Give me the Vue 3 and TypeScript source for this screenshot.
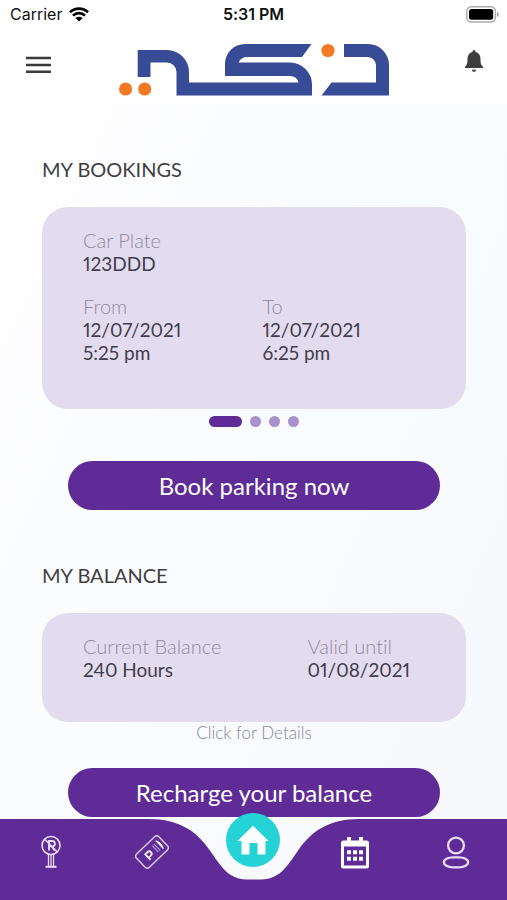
<script setup lang="ts">
import { ref } from 'vue'

interface Booking {
  plate: string
  fromDate: string
  fromTime: string
  toDate: string
  toTime: string
}

const booking: Booking = {
  plate: '123DDD',
  fromDate: '12/07/2021',
  fromTime: '5:25 pm',
  toDate: '12/07/2021',
  toTime: '6:25 pm',
}

const pages: number[] = [1, 2, 3, 4]
const activePage = ref<number>(1)
</script>

<template>
  <div class="screen">
    <header class="top">
      <div class="status">
        <div class="carrier">
          <span>Carrier</span>
          <svg width="20" height="15" viewBox="0 0 20 15" aria-hidden="true">
            <path d="M1 5.2a13 13 0 0 1 18 0M4 8.6a8.6 8.6 0 0 1 12 0" fill="none" stroke="#000" stroke-width="2.7" />
            <path d="M10 14.6 6.4 11.1a5.2 5.2 0 0 1 7.2 0z" fill="#000" />
          </svg>
        </div>
        <span class="clock">5:31 PM</span>
        <svg class="battery" width="33" height="17" viewBox="0 0 33 17" aria-hidden="true">
          <rect x="0.8" y="0.8" width="28.6" height="15.2" rx="4.5" fill="#fff" stroke="#aaa" stroke-width="1.4" />
          <rect x="3" y="3" width="24.2" height="10.8" rx="2.5" fill="#000" />
          <path d="M31 6v5q1.8-.8 1.8-2.5T31 6z" fill="#999" />
        </svg>
      </div>
      <div class="bar">
        <button class="icon-button menu" type="button" aria-label="Menu">
          <svg width="26" height="18" viewBox="0 0 26 18">
            <path d="M0 2h25M0 9h25M0 15.700h25" stroke="#3b3b3b" stroke-width="2.600" />
          </svg>
        </button>
        <svg class="logo" width="270" height="54" viewBox="119 43 270 54" role="img" aria-label="Logo">
          <g fill="#374b97">
            <path d="M137.700 50H167a22 22 0 0 1 22 22v10.500h109.500C297.500 78 294 76 289 76h-64V64a20 20 0 0 1 20-20h66.500L302 57h-54c-5 0-8 2-9.300 5.500H290a22 22 0 0 1 22 22v11H176.500V72a9.500 9.500 0 0 0-9.500-9.500h-16.500V77h-12.800z" />
            <path d="M344 44h24a21 21 0 0 1 21 21v30.500h-67.500l10-13H376V65a8.500 8.500 0 0 0-8-8h-24z" />
          </g>
          <g fill="#f27a24">
            <circle cx="125.600" cy="89" r="6.600" />
            <circle cx="144.700" cy="89" r="6.600" />
            <circle cx="328" cy="50.500" r="6.600" />
          </g>
        </svg>
        <button class="icon-button bell" type="button" aria-label="Notifications">
          <svg width="18" height="23" viewBox="0 0 18 23">
            <path d="M9 0c1 0 1.500.7 1.500 2 3 .7 5 3.200 5 6.500 0 4.500.3 6.500 2.500 8.300V18H0v-1.200c2.200-1.800 2.500-3.800 2.500-8.300 0-3.300 2-5.800 5-6.500C7.500.7 8 0 9 0z" fill="#3d3d3d" />
            <path d="M6.800 19.500h4.400Q11 22 9 22t-2.200-2.500z" fill="#555" />
          </svg>
        </button>
      </div>
    </header>

    <main>
      <section>
        <h2>MY BOOKINGS</h2>
        <dl class="card booking">
          <div class="field wide">
            <dt>Car Plate</dt>
            <dd>{{ booking.plate }}</dd>
          </div>
          <div class="field">
            <dt>From</dt>
            <dd>{{ booking.fromDate }}</dd>
            <dd>{{ booking.fromTime }}</dd>
          </div>
          <div class="field">
            <dt>To</dt>
            <dd>{{ booking.toDate }}</dd>
            <dd>{{ booking.toTime }}</dd>
          </div>
        </dl>
        <div class="pager">
          <button
            v-for="page in pages"
            :key="page"
            type="button"
            class="dot"
            :class="{ active: page === activePage }"
            :aria-label="`Booking ${page}`"
            @click="activePage = page"
          ></button>
        </div>
        <button class="primary" type="button">Book parking now</button>
      </section>

      <section class="balance-section">
        <h2>MY BALANCE</h2>
        <dl class="card balance">
          <div class="field">
            <dt>Current Balance</dt>
            <dd>240 Hours</dd>
          </div>
          <div class="field">
            <dt>Valid until</dt>
            <dd>01/08/2021</dd>
          </div>
        </dl>
        <a class="details" href="#">Click for Details</a>
        <button class="primary" type="button">Recharge your balance</button>
      </section>
    </main>

    <nav class="tabs">
      <div class="shape" aria-hidden="true">
        <span class="side"></span>
        <svg width="210" height="81" viewBox="0 0 210 81">
          <path d="M0 0C30 0 48 12 62 33C76 54 83 60.500 100 60.500H110C127 60.500 134 54 148 33C162 12 180 0 210 0V81H0z" fill="#5e2b97" />
        </svg>
        <span class="side"></span>
      </div>
      <a class="tab" href="#" aria-label="Parking">
        <svg width="20" height="34" viewBox="0 0 20 34" fill="none" stroke="#eadcf6" stroke-width="1.600">
          <circle cx="10" cy="10.500" r="9" />
          <path d="M3.700 4.200 16.300 17" />
          <path d="M8 15.500V6h3.200a2.600 2.600 0 0 1 0 5.400H8M11 11.500l2.500 4" stroke-width="1.900" />
          <path d="M7.500 19.500V31M12.500 19.500V31M10 20v11" stroke-width="1.300" />
          <path d="M4.500 31.800h11" stroke-width="2" />
        </svg>
      </a>
      <a class="tab" href="#" aria-label="Tickets">
        <svg width="34" height="34" viewBox="0 0 34 34" fill="none" stroke="#dcc9ec" stroke-width="1.500">
          <g transform="rotate(-44 17 17)">
            <rect x="1.500" y="7.800" width="31" height="18.400" rx="3" />
            <path d="M21.500 12.500v9M24 12.500v9" stroke="#b79bd3" stroke-width="1.200" />
            <path d="M27.500 11.500q2.800 5.500 0 11z" fill="#f5edfb" stroke="#f5edfb" stroke-width="1" />
            <path d="M10.500 21.500v-7.500h3.200a2.400 2.400 0 0 1 0 4.800h-3.200" stroke="#f5edfb" stroke-width="1.900" />
          </g>
        </svg>
      </a>
      <a class="tab home" href="#" aria-label="Home" aria-current="page">
        <svg width="54" height="54" viewBox="0 0 54 54">
          <circle cx="27" cy="27" r="27" fill="#25d3d7" />
          <path d="M27 12.800 42.500 28H39.500V41.500h-8V30h-8v11.500h-8V28h-4z" fill="#fff" />
        </svg>
      </a>
      <a class="tab" href="#" aria-label="Calendar">
        <svg width="30" height="33" viewBox="0 0 30 33" fill="#fff">
          <path fill-rule="evenodd" d="M7 1h4v3.500h8V1h4v3.500h3.500A2.500 2.500 0 0 1 29 7v23a2.500 2.500 0 0 1-2.500 2.500h-23A2.500 2.500 0 0 1 1 30V7a2.500 2.500 0 0 1 2.500-2.500H7zM4 10.500v19h22v-19z" />
          <path d="M7 14.300h4v4H7zM13 14.300h4v4h-4zM19 14.300h4v4h-4zM7 20.800h4v4H7zM13 20.800h4v4h-4zM19 20.800h4v4h-4z" />
        </svg>
      </a>
      <a class="tab" href="#" aria-label="Profile">
        <svg width="28" height="33" viewBox="0 0 28 33" fill="none" stroke="#eadcf6" stroke-width="2.300">
          <circle cx="14" cy="9.500" r="7.900" />
          <rect x="1.800" y="21.300" width="24.400" height="10" rx="9" ry="5" />
        </svg>
      </a>
    </nav>
  </div>
</template>

<style>
body {
  margin: 0;
}
</style>

<style scoped>
.screen {
  min-height: 100vh;
  padding-bottom: 84px;
  box-sizing: border-box;
  background: linear-gradient(115deg, #fff 0%, #fafbfe 50%, #f7f8fc 100%);
  font-family: Lato, 'Open Sans', sans-serif;
  font-variant-ligatures: none;
  font-variant-numeric: proportional-nums;
  color: #423d4c;
}

button {
  border: 0;
  padding: 0;
  cursor: pointer;
  font-family: inherit;
}

a {
  text-decoration: none;
}

svg {
  display: block;
}

.top {
  height: 104px;
  background: #fff;
}

.status {
  display: grid;
  grid-template-columns: 1fr auto 1fr;
  align-items: center;
  height: 28px;
  padding: 0 8px;
  font-family: Inter, sans-serif;
  font-size: 16px;
  line-height: 28px;
  color: #111;
}

.carrier {
  display: flex;
  align-items: center;
  gap: 7px;
  padding-left: 2px;
}

.clock {
  font-weight: 600;
}

.battery {
  justify-self: end;
}

.bar {
  display: grid;
  grid-template-columns: 1fr auto 1fr;
  align-items: start;
  padding: 15px 24px 0;
}

.icon-button {
  background: none;
}

.menu {
  justify-self: start;
  margin: 13px 0 0 2px;
}

.bell {
  justify-self: end;
  margin-top: 7px;
}

main {
  padding: 52px 41px 0 42px;
}

section {
  display: flex;
  flex-direction: column;
}

.balance-section {
  margin-top: 52px;
}

h2 {
  margin: 0 0 25px;
  font-size: 20px;
  line-height: 26px;
  font-weight: 400;
  color: #3f3f42;
}

.card {
  display: grid;
  margin: 0;
  border-radius: 26px;
  background: #e3dcee;
  box-sizing: border-box;
}

.booking {
  grid-template-columns: 1fr 1fr;
  row-gap: 20px;
  min-height: 202px;
  align-content: start;
  padding: 22px 24px 40px 41px;
}

.wide {
  grid-column: 1 / -1;
}

.balance {
  grid-template-columns: 1fr auto;
  min-height: 109px;
  align-content: start;
  padding: 22px 56px 40px 41px;
}

dt,
dd {
  margin: 0;
  font-size: 19px;
  line-height: 23px;
}

dt {
  font-size: 20px;
  font-weight: 300;
  color: #928b9f;
}

.pager {
  display: flex;
  justify-content: center;
  gap: 8px;
  padding: 7px 0 34px;
}

.dot {
  width: 11px;
  height: 11px;
  border-radius: 6px;
  background: #a991cc;
}

.dot.active {
  width: 33px;
  background: #5e2b97;
}

.primary {
  height: 49px;
  margin: 0 26px;
  border-radius: 25px;
  background: #5e2b97;
  color: #fff;
  font-size: 24px;
  line-height: 30px;
}

.details {
  align-self: center;
  margin-bottom: 24px;
  font-size: 17px;
  line-height: 22px;
  font-weight: 300;
  color: #85859b;
}

.tabs {
  position: fixed;
  left: 0;
  right: 0;
  bottom: 0;
  display: grid;
  grid-template-columns: repeat(5, 1fr);
  height: 81px;
}

.shape {
  position: absolute;
  inset: 0;
  display: flex;
}

.side {
  flex: 1;
  background: #5e2b97;
}

.shape svg {
  margin: 0 -1px;
}

.tab {
  position: relative;
  display: flex;
  align-items: center;
  justify-content: center;
  height: 66px;
}

.home {
  height: 41px;
}
</style>
